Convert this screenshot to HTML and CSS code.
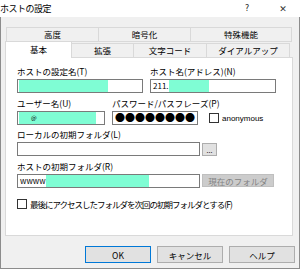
FILE: index.html
```html
<!DOCTYPE html>
<html lang="ja">
<head>
  <meta charset="UTF-8" />
  <title>ホストの設定</title>
  <link rel="stylesheet" href="styles.css">
</head>
<body>
  <div class="window">
    <div class="titlebar">
      <span class="title">ホストの設定</span>
      <span class="help">?</span>
      <span class="close">✕</span>
    </div>

    <div class="client">
      <div class="tabs back">
        <div class="tab t-koudo">高度</div>
        <div class="tab t-angou">暗号化</div>
        <div class="tab t-tokushu">特殊機能</div>
      </div>
      <div class="tabs front">
        <div class="tab t-kihon active">基本</div>
        <div class="tab t-kakuchou">拡張</div>
        <div class="tab t-moji">文字コード</div>
        <div class="tab t-dial">ダイアルアップ</div>
      </div>

      <div class="panel">
        <div class="row">
          <div class="field w126">
            <label>ホストの設定名(T)</label>
            <div class="input"><span class="mask m-name"></span></div>
          </div>
          <div class="field w126">
            <label>ホスト名(アドレス)(N)</label>
            <div class="input"><span class="txt">211.</span><span class="mask m-host"></span></div>
          </div>
        </div>

        <div class="row r2">
          <div class="field w88">
            <label>ユーザー名(U)</label>
            <div class="input"><span class="mask m-user1"></span><span class="at">@</span><span class="mask m-user2"></span></div>
          </div>
          <div class="field w86">
            <label>パスワード/パスフレーズ(P)</label>
            <div class="input"><span class="dots">●●●●●●●●</span></div>
          </div>
          <div class="check anon"><span class="box"></span>anonymous</div>
        </div>

        <div class="field r3">
          <label>ローカルの初期フォルダ(L)</label>
          <div class="line">
            <div class="input w183"></div>
            <div class="btn small">...</div>
          </div>
        </div>

        <div class="field r4">
          <label>ホストの初期フォルダ(R)</label>
          <div class="line">
            <div class="input w183"><span class="txt">wwww</span><span class="mask m-dir"></span></div>
            <div class="btn cur disabled">現在のフォルダ</div>
          </div>
        </div>

        <div class="check last"><span class="box"></span><span class="narrow">最後にアクセスしたフォルダを次回の初期フォルダとする(F)</span></div>
      </div>

      <div class="buttons">
        <div class="btn big default">OK</div>
        <div class="btn big">キャンセル</div>
        <div class="btn big">ヘルプ</div>
      </div>
    </div>
  </div>
</body>
</html>
```

FILE: styles.css
```css
* {
  box-sizing: border-box;
}
body {
  margin: 0;
  background: #fff;
  font-family: "Noto Sans CJK JP", "Noto Sans", sans-serif;
  font-size: 8.5px;
  color: #000;
}
.window {
  width: 300px;
  height: 269px;
  display: flex;
  flex-direction: column;
}
.titlebar {
  height: 17px;
  background: #fff;
  display: flex;
  align-items: center;
  font-size: 9px;
}
.title {
  flex: 1;
  letter-spacing: -0.5px;
}
.help {
  width: 10px;
  margin-right: 26px;
  text-align: center;
  font-family: "DejaVu Sans", sans-serif;
  font-size: 8px;
  color: #222;
}
.close {
  width: 10px;
  margin-right: 12px;
  text-align: center;
  font-family: "DejaVu Sans", sans-serif;
  font-size: 9px;
  color: #333;
}
.client {
  flex: 1;
  background: #f0f0f0;
  border-left: 1px solid #8c8c8c;
  border-right: 1px solid #8c8c8c;
  border-bottom: 1px solid #8c8c8c;
  padding: 10px 0 0 4px;
}

/* tabs */
.tabs {
  display: flex;
  line-height: 12px;
}
.tab {
  text-align: center;
  border: 1px solid #d9d9d9;
  border-bottom: none;
  background: #f0f0f0;
  margin-right: -1px;
}
.back {
  margin-left: 1px;
  height: 15px;
}
.back .tab {
  height: 15px;
  border-bottom: 1px solid #d9d9d9;
}
.t-koudo { width: 93px; }
.t-angou { width: 93px; }
.t-tokushu { width: 102px; }
.front {
  height: 16px;
  align-items: flex-end;
  margin-top: -1px;
  position: relative;
  z-index: 1;
}
.front .tab {
  height: 14px;
}
.front .active {
  height: 17px;
  background: #fff;
  margin-bottom: -1px;
  line-height: 15px;
}
.t-kihon { width: 67px; }
.t-kakuchou { width: 63px; }
.t-moji { width: 74px; }
.t-dial { width: 84px; }

/* panel */
.panel {
  width: 288px;
  height: 179px;
  background: #fff;
  border: 1px solid #d9d9d9;
  padding: 8px 0 0 11px;
}
.row {
  display: flex;
  gap: 7px;
  align-items: flex-end;
}
.r2 {
  margin-top: 5px;
}
.field label {
  display: block;
  line-height: 11px;
  height: 11px;
  margin-bottom: 2px;
  white-space: nowrap;
}
.w126 { width: 126px; }
.w88 { width: 88px; }
.w86 { width: 86px; }
.w183 { width: 183px; }
.input {
  height: 14px;
  border: 1px solid #7a7a7a;
  background: #fff;
  display: flex;
  align-items: center;
  padding-left: 1px;
  overflow: hidden;
}
.txt {
  font-size: 8px;
  line-height: 12px;
  padding-left: 1px;
}
.mask {
  display: inline-block;
  height: 12px;
  background: #7ffdd4;
}
.m-name { width: 89px; }
.m-host { width: 40px; }
.m-user1 { width: 12px; }
.m-user2 { width: 59px; }
.m-dir { width: 103px; }
.at {
  font-size: 6px;
  width: 6px;
  line-height: 12px;
  background: #7ffdd4;
  padding: 0 1px 0 0;
}
.dots {
  font-size: 10px;
  line-height: 12px;
  padding-left: 1px;
}
.check {
  display: flex;
  align-items: center;
  gap: 3px;
  white-space: nowrap;
}
.box {
  width: 10px;
  height: 10px;
  border: 1px solid #333;
  background: #fff;
}
.anon {
  margin-left: 4px;
  height: 14px;
  font-family: "Liberation Sans", sans-serif;
  font-size: 8px;
}
.r3 {
  margin-top: 4px;
}
.r4 {
  margin-top: 5px;
}
.line {
  display: flex;
  gap: 2px;
}
.btn {
  background: #e1e1e1;
  border: 1px solid #adadad;
  text-align: center;
  display: flex;
  align-items: center;
  justify-content: center;
}
.small {
  width: 15px;
  height: 13px;
  font-size: 7px;
  margin-top: 1px;
}
.cur {
  width: 72px;
  height: 13px;
}
.disabled {
  background: #cccccc;
  border-color: #bfbfbf;
  color: #838383;
}
.last {
  margin-top: 10px;
  height: 11px;
}
.narrow {
  letter-spacing: -1px;
}

/* bottom buttons */
.buttons {
  display: flex;
  justify-content: flex-end;
  gap: 6px;
  margin-top: 10px;
  padding-right: 4px;
}
.big {
  width: 66px;
  height: 17px;
}
.default {
  border-color: #0078d7;
}
```
